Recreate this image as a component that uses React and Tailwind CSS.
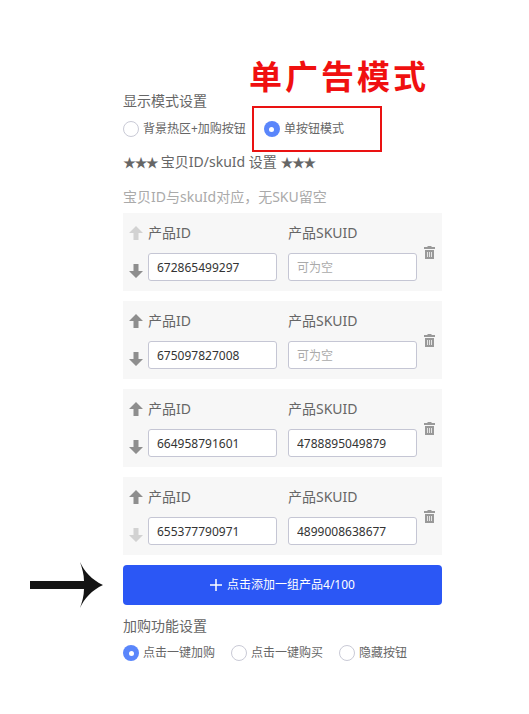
const font = { fontFamily: '"Noto Sans", "Noto Sans CJK SC", sans-serif' };

const products = [
  { id: '672865499297', sku: '', upOff: true },
  { id: '675097827008', sku: '' },
  { id: '664958791601', sku: '4788895049879' },
  { id: '655377790971', sku: '4899008638677', downOff: true },
];

function Radio({ label, checked }) {
  return (
    <div className="flex items-center gap-[4px]">
      {checked ? (
        <span className="w-4 h-4 rounded-full bg-[#5a86fb] flex items-center justify-center">
          <span className="w-[5px] h-[5px] rounded-full bg-white" />
        </span>
      ) : (
        <span className="w-4 h-4 rounded-full border border-[#c9cad6] bg-white" />
      )}
      <span className="text-[12px] leading-4 text-[#666]">{label}</span>
    </div>
  );
}

function Arrow({ down, off }) {
  return (
    <svg
      width="14"
      height="14"
      viewBox="0 0 14 14"
      className={off ? 'text-[#d2d2d2]' : 'text-[#8e8e8e]'}
    >
      <path
        fill="currentColor"
        d={down ? 'M4.500 0h5v7H14l-7 7-7-7h4.500z' : 'M4.500 14h5V7H14L7 0 0 7h4.500z'}
      />
    </svg>
  );
}

function TrashIcon() {
  return (
    <svg width="11" height="13" viewBox="0 0 11 13" className="text-[#999]">
      <path fill="currentColor" d="M3.500 0h4v1H11v2H0V1h3.500zM1 4h9v9H1z" />
      <path fill="#e4e4e4" d="M3 6h1v5H3zM5 6h1v5H5zM7 6h1v5H7z" />
    </svg>
  );
}

function ProductCard({ item }) {
  return (
    <div className="flex h-[78px] bg-[#f7f7f7]">
      <div className="w-[25px] flex flex-col items-center justify-between pt-[13px] pb-[13px]">
        <Arrow off={item.upOff} />
        <Arrow down off={item.downOff} />
      </div>
      <div className="w-[129px]">
        <div className="h-[40px] pt-[10px] text-[14px] leading-5 text-[#666]">产品ID</div>
        <input
          readOnly
          value={item.id}
          className="w-full h-[28px] px-2 rounded-[3px] border border-[#c5c6d4] bg-white text-[12px] text-[#333] outline-none"
        />
      </div>
      <div className="w-[129px] ml-[11px]">
        <div className="h-[40px] pt-[10px] text-[14px] leading-5 text-[#666]">产品SKUID</div>
        <input
          readOnly
          value={item.sku}
          placeholder="可为空"
          className="w-full h-[28px] px-2 rounded-[3px] border border-[#c5c6d4] bg-white text-[12px] text-[#333] placeholder:text-[#aaa] outline-none"
        />
      </div>
      <div className="flex-1 flex justify-center pt-[33px]">
        <TrashIcon />
      </div>
    </div>
  );
}

export default function App() {
  return (
    <div className="relative w-[529px] h-[714px] bg-white overflow-hidden" style={font}>
      {/* annotations on top of the page */}
      <div className="absolute left-[249px] top-[55px] text-[33px] leading-[44px] font-bold tracking-[3px] text-[#f01010]">
        单广告模式
      </div>
      <div className="absolute left-[252px] top-[106px] w-[130px] h-[46px] border-2 border-[#ea1212]" />
      <svg className="absolute left-[30px] top-[562px]" width="73" height="46" viewBox="0 0 73 46">
        <path fill="#141414" d="M0 19h54C54 12 52 6 50 0c4 9 12 18 23 23-11 5-19 14-23 23 2-6 4-12 4-19H0z" />
      </svg>

      <div className="ml-[123px] w-[319px] pt-[91px]">
        <div className="text-[14px] leading-5 text-[#666]">显示模式设置</div>
        <div className="flex gap-[18px] mt-[10px]">
          <Radio label="背景热区+加购按钮" />
          <Radio label="单按钮模式" checked />
        </div>
        <div className="mt-[15px] h-5 text-[14px] leading-5 text-[#666]">
          <span className="text-[13px] tracking-[-1.6px]">★★★</span> 宝贝ID/skuId 设置 <span className="text-[13px] tracking-[-1.6px]">★★★</span>
        </div>
        <div className="mt-[15px] h-5 text-[14px] leading-5 text-[#aaa]">宝贝ID与skuId对应，无SKU留空</div>

        <div className="flex flex-col gap-[10px] mt-[6px]">
          {products.map((item) => (
            <ProductCard key={item.id} item={item} />
          ))}
        </div>

        <button className="mt-[10px] w-full h-[40px] rounded-[4px] bg-[#2b57f5] text-white flex items-center justify-center gap-[5px] text-[12px]">
          <svg width="12" height="12" viewBox="0 0 12 12">
            <path fill="currentColor" d="M5.250 0h1.500v5.250H12v1.500H6.750V12h-1.500V6.750H0v-1.500h5.250z" />
          </svg>
          点击添加一组产品4/100
        </button>

        <div className="mt-[11px] text-[14px] leading-5 text-[#666]">加购功能设置</div>
        <div className="flex gap-[16px] mt-[9px]">
          <Radio label="点击一键加购" checked />
          <Radio label="点击一键购买" />
          <Radio label="隐藏按钮" />
        </div>
      </div>
    </div>
  );
}
